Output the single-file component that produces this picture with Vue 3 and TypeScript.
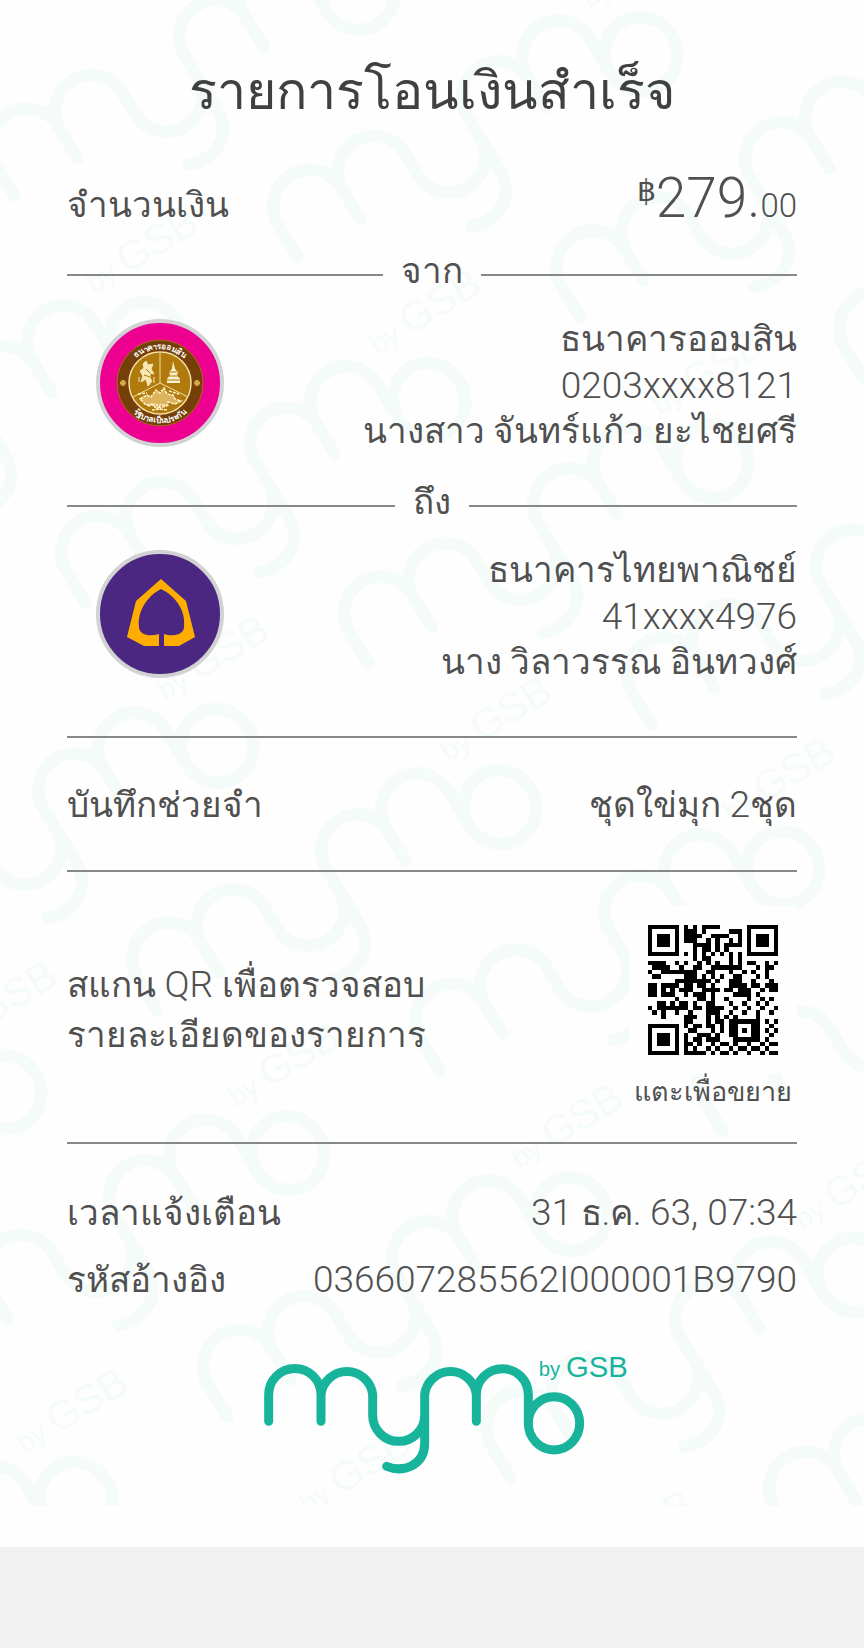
<script setup lang="ts">
interface Party {
  divider: string
  bank: string
  account: string
  name: string
  kind: 'gsb' | 'scb'
}

const parties: Party[] = [
  { divider: 'จาก', bank: 'ธนาคารออมสิน', account: '0203xxxx8121', name: 'นางสาว จันทร์แก้ว ยะไชยศรี', kind: 'gsb' },
  { divider: 'ถึง', bank: 'ธนาคารไทยพาณิชย์', account: '41xxxx4976', name: 'นาง วิลาวรรณ อินทวงศ์', kind: 'scb' },
]

// Watermark marks repeat on a slanted lattice.
const marks: string[] = []
for (let row = -3; row <= 2; row++) {
  for (let col = -3; col <= 5; col++) {
    const x = 217 + col * 283 + row * 71
    const y = 746 + col * 61 + row * 407
    marks.push(`translate(${x} ${y}) rotate(-31) scale(0.466) translate(-912 -253)`)
  }
}

const qr = [
  '11111110101011110000001111111',
  '10000010111010000011101000001',
  '10111010111100111100101011101',
  '10111010111001010010101011101',
  '10111010001111010111101011101',
  '10000010001011010100001000001',
  '11111110101010101010101111111',
  '00000000001011000010100000000',
  '11110010100101010010101100101',
  '01111001001100111111100010110',
  '10011111111001100010010100100',
  '01100000111010101001100010100',
  '00000011111111010011100100010',
  '11011110110110100011110110111',
  '11010101110011110110111001011',
  '11011100101110100001111010000',
  '00000010000110100100001001010',
  '00110101101001100010010010100',
  '10111111101101111001001001001',
  '01010010010001110010010010010',
  '00010000111001010101000010000',
  '00000000110001011011111110101',
  '11111110101101101011000110010',
  '10000010011000101011010110101',
  '10111010100111010011000110010',
  '10111010101101110001111110100',
  '10111010110100101101001001011',
  '10000010101001010010110110100',
  '11111110111110101101001001011',
]
const qrPath = qr
  .map((line, y) => [...line].map((bit, x) => (bit === '1' ? `M${x} ${y}h1v1h-1z` : '')).join(''))
  .join('')
</script>

<template>
  <main class="page">
    <section class="slip">
      <svg class="watermark" aria-hidden="true">
        <defs>
          <g id="mymo">
            <path
              d="M56 247V167a78 78 0 0 1 157 0V247M213 167a78 78 0 0 1 155 0V229a78 78 0 0 0 156 0M410 382C460 402 524 380 524 313V167a78 78 0 0 1 155 0V247M679 167a78 78 0 0 1 156 0V253a77 80 0 1 0 154 0a77 80 0 1 0 -154 0"
              fill="none" stroke="currentColor" stroke-width="27" stroke-linecap="round" stroke-linejoin="round" />
            <text x="866" y="112" font-size="61" fill="currentColor">by</text>
            <text x="948" y="113" font-size="88" fill="currentColor">GSB</text>
          </g>
        </defs>
        <use v-for="mark in marks" :key="mark" href="#mymo" :transform="mark" />
      </svg>

      <div class="content">
        <h1>รายการโอนเงินสำเร็จ</h1>
        <div class="row amount-row">
          <span>จำนวนเงิน</span>
          <span class="amount"><span class="baht">฿</span>279.<span class="satang">00</span></span>
        </div>

        <section v-for="party in parties" :key="party.kind" class="party">
          <h2>{{ party.divider }}</h2>
          <div class="party-body">
            <svg v-if="party.kind === 'gsb'" class="badge" viewBox="0 0 128 128" role="img" aria-label="ธนาคารออมสิน">
              <circle cx="64" cy="64" r="62" fill="#ed0090" stroke="#d0d2d3" stroke-width="4" />
              <circle cx="64" cy="64" r="43" fill="#743f08" stroke="#b5651a" stroke-width="1" />
              <circle cx="64" cy="64" r="31" fill="#b07a0c" stroke="#f2dfa4" stroke-width="1.5" />
              <path d="M64 34v30M64 64L37 78M64 64L92 78" stroke="#f2dfa4" fill="none" />
              <path d="M77 42l2 8 3 3-1 3 3 4v4h-13v-4l3-4-1-3 3-3z" fill="#fbf2cf" />
              <path d="M72 57h11M73 53h8M70 61h15" stroke="#b07a0c" stroke-width="1" />
              <path d="M50 42l2 4 5-1-2 5 3 5-4-1v5l2 3-4 5-2-7-5 3 2-6-3-5 4-3-1-4zM43 58v5M58 58v6" fill="#f6e7b5" stroke="#f6e7b5" stroke-width="1" />
              <path d="M50 50l4 4M48 56l6 2" stroke="#b07a0c" />
              <path d="M44 80l7-4 4 2 5-7 4 3 4-5 3 6 6 1 2 4 6 2-6 3-7-2-2 4-5-2-4 5-5-5-6 1zM52 87l8-2 4 4 9-3M56 91l8-1 7 1M42 75l9-1M73 72l10 3" fill="#dcb45e" stroke="#fff5cf" stroke-width="1.5" stroke-dasharray="3 1" />
              <path d="M27 61v6M24 64h6M101 61v6M98 64h6" stroke="#d9a64b" stroke-width="3" />
              <path id="seal-top" d="M30 64a34 34 0 0 1 68 0" fill="none" />
              <path id="seal-bottom" d="M24 64a40 40 0 0 0 80 0" fill="none" />
              <text class="seal"><textPath href="#seal-top" startOffset="50%">ธนาคารออมสิน</textPath></text>
              <text class="seal"><textPath href="#seal-bottom" startOffset="50%">รัฐบาลเป็นประกัน</textPath></text>
            </svg>
            <svg v-else class="badge" viewBox="0 0 128 128" role="img" aria-label="ธนาคารไทยพาณิชย์">
              <circle cx="64" cy="64" r="62" fill="#4b2781" stroke="#d0d2d3" stroke-width="4" />
              <path d="M65 29L90 51L99 87L83 96H68V84C76 87 88 85 88 77C90 61 80 46 65 39C51 46 41 62 43 77C43 85 54 87 63 84V96H48L31 87L40 51Z" fill="#ffae00" />
            </svg>
            <div class="party-text">
              <p>{{ party.bank }}</p>
              <p class="latin">{{ party.account }}</p>
              <p>{{ party.name }}</p>
            </div>
          </div>
        </section>

        <div class="row memo">
          <span>บันทึกช่วยจำ</span>
          <span>ชุดใข่มุก <span class="latin">2</span>ชุด</span>
        </div>

        <div class="scan">
          <p>สแกน <span class="latin">QR</span> เพื่อตรวจสอบ<br />รายละเอียดของรายการ</p>
          <button type="button" class="qr-button">
            <span class="qr-box">
              <svg viewBox="0 0 29 29" shape-rendering="crispEdges" aria-hidden="true"><path :d="qrPath" /></svg>
            </span>
            <span class="qr-caption">แตะเพื่อขยาย</span>
          </button>
        </div>

        <dl class="details">
          <div class="row">
            <dt>เวลาแจ้งเตือน</dt>
            <dd><span class="latin">31</span> ธ.ค. <span class="latin">63, 07:34</span></dd>
          </div>
          <div class="row">
            <dt>รหัสอ้างอิง</dt>
            <dd class="latin">036607285562I000001B9790</dd>
          </div>
        </dl>

        <svg class="logo" viewBox="-42 42 1176 366" role="img" aria-label="mymo by GSB">
          <use href="#mymo" />
        </svg>
      </div>
    </section>
  </main>
</template>

<style>
body {
  background: #f1f1f1;
}
</style>

<style scoped>
.page {
  font-family: Roboto, "Noto Sans", sans-serif;
  font-weight: 300;
  font-size: 35px;
  line-height: 48px;
  color: #505050;
}
.slip {
  position: relative;
  background: #fefefe;
  padding-bottom: 72px;
}
.watermark {
  position: absolute;
  top: 0;
  left: 0;
  width: 100%;
  height: calc(100% - 41px);
  color: #f5fbf9;
}
.watermark text,
.logo text {
  font-family: "Liberation Sans", Arial, sans-serif;
  font-weight: 400;
}
.content {
  position: relative;
  padding: 56px 67px 0;
}
h1, h2, p, dl, dd {
  margin: 0;
  font-weight: inherit;
}
h1 {
  font-size: 52px;
  line-height: 72px;
  text-align: center;
  color: #404040;
}
.latin {
  font-size: 37px;
  line-height: 1;
}
.row {
  display: flex;
  justify-content: space-between;
  align-items: baseline;
}
.amount-row {
  margin-top: 34px;
  line-height: 72px;
}
.amount {
  font-size: 55px;
}
.baht {
  font-size: 30px;
  font-weight: 400;
  vertical-align: 16px;
  line-height: 1;
}
.satang {
  font-size: 33px;
}
h2 {
  display: flex;
  align-items: center;
  gap: 18px;
  font-size: inherit;
}
h2::before,
h2::after {
  content: "";
  flex: 1;
  height: 2px;
  margin-top: 6px;
  background: #888;
}
.party {
  height: 231px;
}
.amount-row + .party {
  margin-top: 6px;
}
.party-body {
  display: flex;
  justify-content: space-between;
  padding: 21px 0 0 29px;
}
.badge {
  width: 128px;
  height: 128px;
  margin-top: 2px;
}
.seal {
  font-size: 8px;
  font-weight: 700;
  fill: #fff;
  text-anchor: middle;
}
.party-text {
  text-align: right;
  line-height: 46px;
}
.party-text .latin {
  line-height: 46px;
}
.memo {
  margin-top: 26px;
  padding: 44px 0 40px;
  border-top: 2px solid #888;
  border-bottom: 2px solid #888;
}
.scan {
  display: flex;
  justify-content: space-between;
  align-items: center;
  padding: 34px 0 32px;
  line-height: 50px;
  border-bottom: 2px solid #888;
}
.scan p {
  padding-top: 6px;
}
.qr-button {
  display: flex;
  flex-direction: column;
  align-items: center;
  padding: 0;
  border: 0;
  background: none;
  font: inherit;
  color: inherit;
}
.qr-box {
  box-sizing: border-box;
  width: 168px;
  height: 168px;
  padding: 19px;
  background: #fefefe;
}
.qr-box svg {
  display: block;
}
.qr-caption {
  font-size: 27px;
  line-height: 36px;
}
.details {
  padding-top: 36px;
}
.details .row {
  line-height: 67px;
}
.logo {
  display: block;
  width: 392px;
  height: 122px;
  margin: 39px auto 0;
  color: #17b39b;
}
</style>
